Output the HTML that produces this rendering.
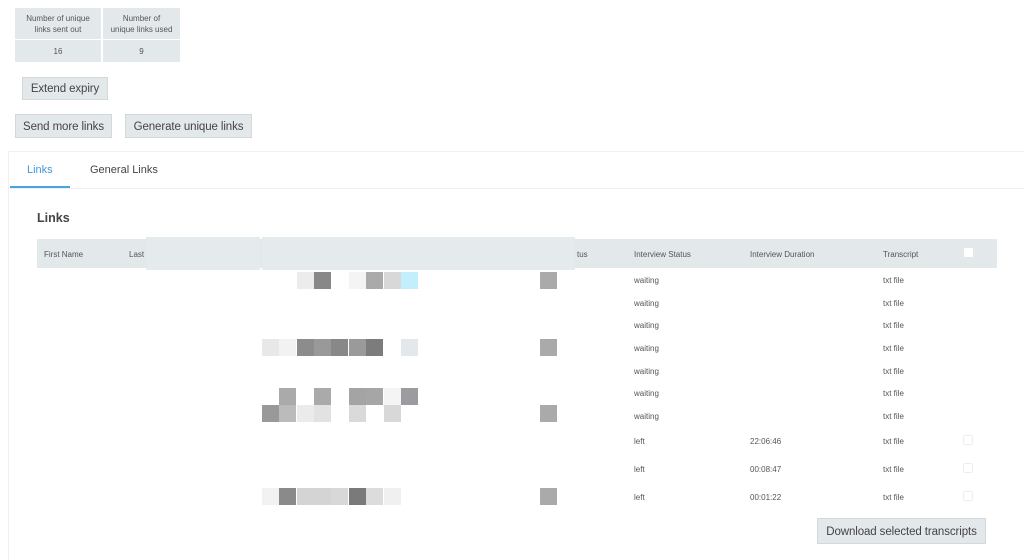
<!DOCTYPE html><html><head><style>
body{margin:0;width:1024px;height:560px;background:#fff;font-family:"Liberation Sans",sans-serif;color:#555;position:relative;overflow:hidden}
.a{position:absolute}
.btn{position:absolute;background:#e3e8eb;border:1px solid #d3d8db;font-size:11.5px;color:#444;display:flex;align-items:center;justify-content:center;box-sizing:border-box;letter-spacing:-0.1px}
.c{position:absolute;background:#e3e8eb;font-size:8px;color:#555;text-align:center;display:flex;align-items:center;justify-content:center;line-height:11px}
.t{position:absolute;font-size:8px;color:#555}
.p{position:absolute;width:17px;height:17px}
.cb{position:absolute;width:10px;height:10px;border:1px solid #eee;border-radius:2px;box-sizing:border-box}
</style></head><body>
<div class="c" style="left:15px;top:8px;width:86px;height:31px">Number of unique<br>links sent out</div>
<div class="c" style="left:103px;top:8px;width:77px;height:31px">Number of<br>unique links used</div>
<div class="c" style="left:15px;top:40px;width:86px;height:22px">16</div>
<div class="c" style="left:103px;top:40px;width:77px;height:22px">9</div>
<div class="btn" style="left:22px;top:77px;width:86px;height:23px;padding-top:1px">Extend expiry</div>
<div class="btn" style="left:15px;top:114px;width:97px;height:24px;padding-top:1px">Send more links</div>
<div class="btn" style="left:125px;top:114px;width:127px;height:24px;padding-top:1px">Generate unique links</div>
<div class="a" style="left:8px;top:151px;width:1016px;height:1px;background:#eef0f1"></div>
<div class="a" style="left:8px;top:151px;width:1px;height:409px;background:#eef0f1"></div>
<div class="a" style="left:8px;top:188px;width:1016px;height:1px;background:#eef0f1"></div>
<div class="a" style="left:10px;top:186px;width:60px;height:2px;background:#4aa3df"></div>
<div class="a" style="left:27px;top:164px;font-size:11px;color:#3d9ad8">Links</div>
<div class="a" style="left:90px;top:164px;font-size:11px;color:#444">General Links</div>
<div class="a" style="left:37px;top:211px;font-size:12.5px;font-weight:bold;color:#444">Links</div>
<div class="a" style="left:37px;top:239px;width:960px;height:29px;background:#e3e8eb"></div>
<div class="a" style="left:146px;top:237px;width:114px;height:33px;background:#e5eaed"></div>
<div class="a" style="left:262px;top:237px;width:313px;height:33px;background:#e5eaed"></div>
<div class="t" style="left:44px;top:250px">First Name</div>
<div class="t" style="left:129px;top:250px">Last</div>
<div class="t" style="left:577px;top:250px">tus</div>
<div class="t" style="left:634px;top:250px">Interview Status</div>
<div class="t" style="left:750px;top:250px">Interview Duration</div>
<div class="t" style="left:883px;top:250px">Transcript</div>
<div class="a" style="left:964px;top:248px;width:9px;height:9px;background:#fff;border-radius:1px"></div>
<div class="p" style="left:297px;top:272px;background:#ececec"></div>
<div class="p" style="left:314px;top:272px;background:#888"></div>
<div class="p" style="left:349px;top:272px;background:#f4f4f4"></div>
<div class="p" style="left:366px;top:272px;background:#aaa"></div>
<div class="p" style="left:384px;top:272px;background:#d8d8d8"></div>
<div class="p" style="left:401px;top:272px;background:#c3eefc"></div>
<div class="p" style="left:540px;top:272px;background:#aaa"></div>
<div class="p" style="left:262px;top:339px;background:#e8e8e8"></div>
<div class="p" style="left:279px;top:339px;background:#f2f2f2"></div>
<div class="p" style="left:297px;top:339px;background:#8c8c8c"></div>
<div class="p" style="left:314px;top:339px;background:#999"></div>
<div class="p" style="left:331px;top:339px;background:#888"></div>
<div class="p" style="left:349px;top:339px;background:#9a9a9a"></div>
<div class="p" style="left:366px;top:339px;background:#7c7c7c"></div>
<div class="p" style="left:401px;top:339px;background:#e2e8ec"></div>
<div class="p" style="left:540px;top:339px;background:#aaa"></div>
<div class="p" style="left:279px;top:388px;background:#aaa"></div>
<div class="p" style="left:314px;top:388px;background:#aaa"></div>
<div class="p" style="left:349px;top:388px;background:#a4a4a4"></div>
<div class="p" style="left:366px;top:388px;background:#a6a6a6"></div>
<div class="p" style="left:384px;top:388px;background:#f4f4f4"></div>
<div class="p" style="left:401px;top:388px;background:#9c9ca0"></div>
<div class="p" style="left:262px;top:405px;background:#999"></div>
<div class="p" style="left:279px;top:405px;background:#bbb"></div>
<div class="p" style="left:297px;top:405px;background:#ebebeb"></div>
<div class="p" style="left:314px;top:405px;background:#e2e2e2"></div>
<div class="p" style="left:349px;top:405px;background:#dadada"></div>
<div class="p" style="left:384px;top:405px;background:#d8d8d8"></div>
<div class="p" style="left:540px;top:405px;background:#aaa"></div>
<div class="p" style="left:262px;top:488px;background:#f2f2f2"></div>
<div class="p" style="left:279px;top:488px;background:#8a8a8a"></div>
<div class="p" style="left:297px;top:488px;background:#d4d4d4"></div>
<div class="p" style="left:314px;top:488px;background:#d4d4d4"></div>
<div class="p" style="left:331px;top:488px;background:#d8d8d8"></div>
<div class="p" style="left:349px;top:488px;background:#7a7a7a"></div>
<div class="p" style="left:366px;top:488px;background:#dcdcdc"></div>
<div class="p" style="left:384px;top:488px;background:#f0f0f0"></div>
<div class="p" style="left:540px;top:488px;background:#aaa"></div>
<div class="t" style="left:634px;top:276px">waiting</div><div class="t" style="left:883px;top:276px">txt file</div>
<div class="t" style="left:634px;top:299px">waiting</div><div class="t" style="left:883px;top:299px">txt file</div>
<div class="t" style="left:634px;top:321px">waiting</div><div class="t" style="left:883px;top:321px">txt file</div>
<div class="t" style="left:634px;top:344px">waiting</div><div class="t" style="left:883px;top:344px">txt file</div>
<div class="t" style="left:634px;top:367px">waiting</div><div class="t" style="left:883px;top:367px">txt file</div>
<div class="t" style="left:634px;top:389px">waiting</div><div class="t" style="left:883px;top:389px">txt file</div>
<div class="t" style="left:634px;top:412px">waiting</div><div class="t" style="left:883px;top:412px">txt file</div>
<div class="t" style="left:634px;top:437px">left</div><div class="t" style="left:750px;top:437px">22:06:46</div><div class="t" style="left:883px;top:437px">txt file</div><div class="cb" style="left:963px;top:435px"></div>
<div class="t" style="left:634px;top:465px">left</div><div class="t" style="left:750px;top:465px">00:08:47</div><div class="t" style="left:883px;top:465px">txt file</div><div class="cb" style="left:963px;top:463px"></div>
<div class="t" style="left:634px;top:493px">left</div><div class="t" style="left:750px;top:493px">00:01:22</div><div class="t" style="left:883px;top:493px">txt file</div><div class="cb" style="left:963px;top:491px"></div>
<div class="btn" style="left:817px;top:518px;width:169px;height:26px;padding-top:1px">Download selected transcripts</div>
</body></html>
